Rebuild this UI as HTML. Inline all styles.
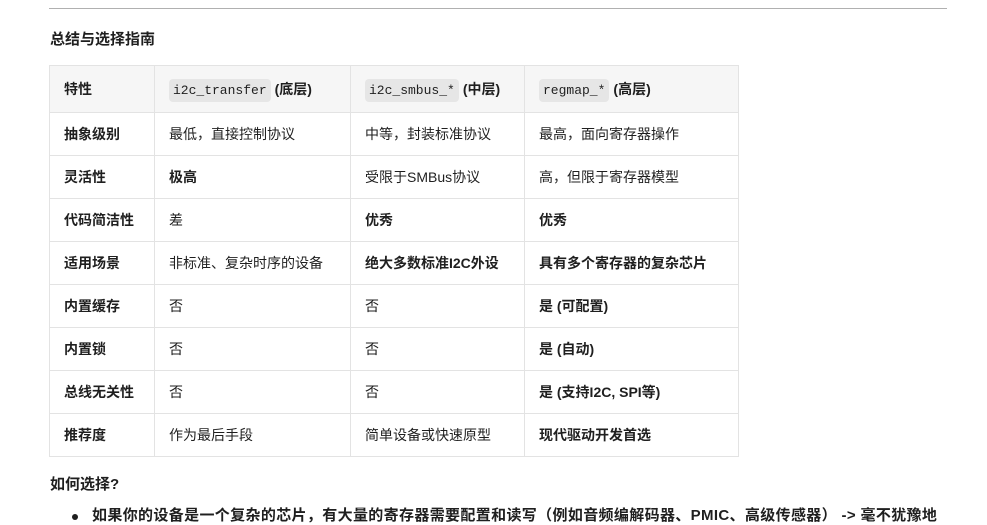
<!DOCTYPE html>
<html><head><meta charset="utf-8"><style>
body{margin:0;background:#fff;width:987px;height:519px;overflow:hidden;font-family:"Liberation Sans","Noto Sans CJK SC",sans-serif;color:#1f1f1f;font-size:14px;position:relative}
.hr{position:absolute;left:49px;top:8px;width:898px;height:1px;background:#b0b0b0}
h3{position:absolute;left:50px;top:28px;margin:0;font-size:15px;font-weight:bold}
table{position:absolute;left:49px;top:65px;border-collapse:collapse;table-layout:fixed;width:689px}
td{border:1px solid #e3e3e3;padding:0 0 0 14px;height:42px;vertical-align:middle;white-space:nowrap;overflow:hidden}
tr:first-child td{height:46px;background:#f6f6f6;font-weight:bold}
td:first-child{font-weight:bold}
.b{font-weight:bold}
code{font-family:"Liberation Mono",monospace;font-size:13px;background:#e6e6e6;border-radius:4px;padding:4px 4px;font-weight:normal;margin-right:4px}
.q{position:absolute;left:50px;top:473px;font-size:15px;font-weight:bold}
.li{position:absolute;left:76px;top:504px;font-size:15px;font-weight:bold;white-space:nowrap;letter-spacing:0.35px}
.li:before{content:"";position:absolute;left:-4px;top:10px;width:6px;height:6px;border-radius:50%;background:#1f1f1f}
.li span{margin-left:16px}
</style></head><body>
<div class="hr"></div>
<h3>总结与选择指南</h3>
<table>
<colgroup><col style="width:105px"><col style="width:196px"><col style="width:174px"><col style="width:214px"></colgroup>
<tr><td>特性</td><td><code>i2c_transfer</code>(底层)</td><td><code>i2c_smbus_*</code>(中层)</td><td><code>regmap_*</code>(高层)</td></tr>
<tr><td>抽象级别</td><td>最低，直接控制协议</td><td>中等，封装标准协议</td><td>最高，面向寄存器操作</td></tr>
<tr><td>灵活性</td><td class="b">极高</td><td>受限于SMBus协议</td><td>高，但限于寄存器模型</td></tr>
<tr><td>代码简洁性</td><td>差</td><td class="b">优秀</td><td class="b">优秀</td></tr>
<tr><td>适用场景</td><td>非标准、复杂时序的设备</td><td class="b">绝大多数标准I2C外设</td><td class="b">具有多个寄存器的复杂芯片</td></tr>
<tr><td>内置缓存</td><td>否</td><td>否</td><td class="b">是 (可配置)</td></tr>
<tr><td>内置锁</td><td>否</td><td>否</td><td class="b">是 (自动)</td></tr>
<tr><td>总线无关性</td><td>否</td><td>否</td><td class="b">是 (支持I2C, SPI等)</td></tr>
<tr><td>推荐度</td><td>作为最后手段</td><td>简单设备或快速原型</td><td class="b">现代驱动开发首选</td></tr>
</table>
<div class="q">如何选择?</div>
<div class="li"><span>如果你的设备是一个复杂的芯片，有大量的寄存器需要配置和读写（例如音频编解码器、PMIC、高级传感器） -&gt; 毫不犹豫地</span></div>
</body></html>
